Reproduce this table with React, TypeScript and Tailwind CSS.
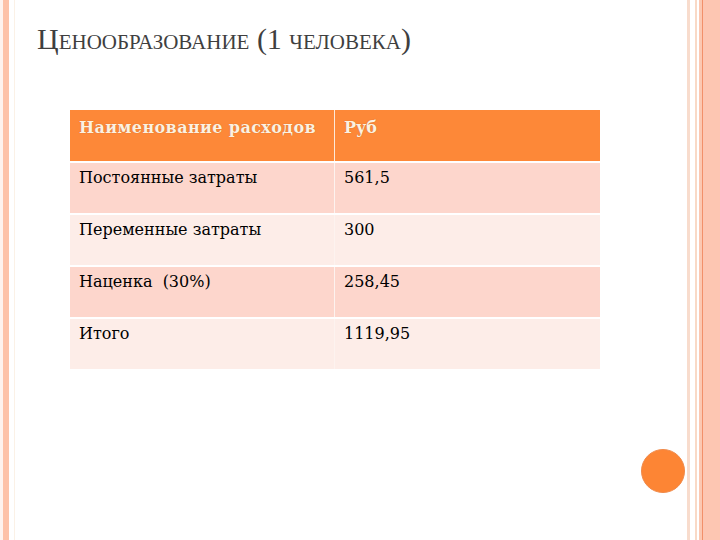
const ROWS = [
  { name: "Постоянные затраты", value: "561,5", bg: "bg-[#fdd6cc]" },
  { name: "Переменные затраты", value: "300", bg: "bg-[#fdede8]" },
  { name: "Наценка  (30%)", value: "258,45", bg: "bg-[#fdd6cc]" },
  { name: "Итого", value: "1119,95", bg: "bg-[#fdede8]" },
];

export default function App() {
  return (
    <div className="relative w-[720px] h-[540px] overflow-hidden bg-white flex">
      {/* left border stripes */}
      <div className="w-[3px] bg-[#fef3ee]" />
      <div className="w-[6px] bg-[#fdc2a8]" />
      <div className="w-[5px] bg-white" />
      <div className="w-[1px] bg-[#fbf1e6]" />

      <div className="flex-1 flex flex-col">
        <h1 className="ml-[22px] mt-[22px] text-[30px] leading-[34px] text-[#3f3f3f] [font-variant:small-caps] font-['Liberation_Serif',serif]">
          Ценообразование (1 человека)
        </h1>

        <div className="ml-[55px] mt-[54px] w-[530px] flex flex-col gap-[2px] text-[16px] leading-[18px] font-['DejaVu_Serif',serif]">
          <div className="grid grid-cols-[264px_1fr] gap-[1px] bg-[#fde9d8] h-[51px]">
            <div className="bg-[#fd8838] pl-[9px] pt-[9px] font-bold tracking-[0.4px] text-[#fdf1e0] [text-shadow:0_0_1px_#b8652a]">
              Наименование расходов
            </div>
            <div className="bg-[#fd8838] pl-[9px] pt-[9px] font-bold text-[#fdf1e0] [text-shadow:0_0_1px_#b8652a]">
              Руб
            </div>
          </div>
          {ROWS.map((r) => (
            <div key={r.name} className="grid grid-cols-[264px_1fr] gap-[1px] bg-[#fdf3ef] h-[50px]">
              <div className={`${r.bg} pl-[9px] pt-[6px] text-black whitespace-pre`}>{r.name}</div>
              <div className={`${r.bg} pl-[9px] pt-[6px] text-black`}>{r.value}</div>
            </div>
          ))}
        </div>
      </div>

      {/* right border stripes */}
      <div className="w-[3px] bg-[#f8dccd]" />
      <div className="w-[5px] bg-white" />
      <div className="w-[2px] bg-[#f9d9c6]" />
      <div className="w-[2px] bg-white" />
      <div className="w-[3px] bg-[#fcc8b2]" />
      <div className="w-[1px] bg-[#f2906a]" />
      <div className="w-[17px] bg-[#fdc6b2]" />

      <div className="absolute left-[641px] top-[449px] w-[44px] h-[44px] rounded-full bg-[#fd8534] border border-[#f08a4a]" />
    </div>
  );
}
